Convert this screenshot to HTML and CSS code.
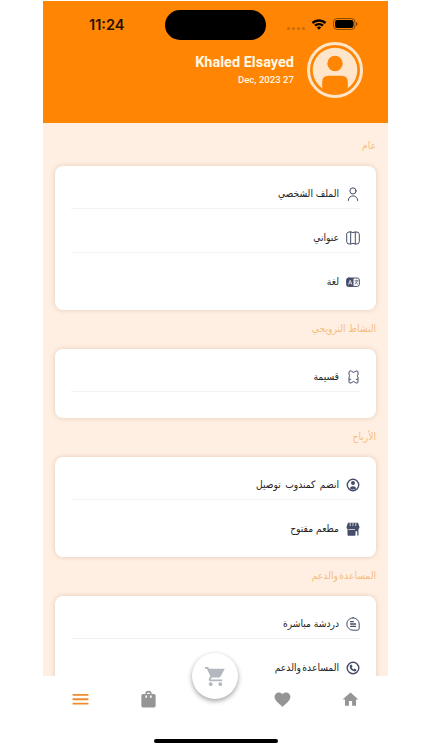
FILE: index.html
```html
<!DOCTYPE html>
<html lang="ar" dir="rtl">
<head>
<meta charset="utf-8">
<title>القائمة</title>
<link rel="stylesheet" href="styles.css">
</head>
<body>
<div class="phone">
  <header class="header">
    <div class="status" dir="ltr">
      <span class="time">11:24</span>
      <span class="island"></span>
      <span class="signals">
        <span class="dots"><i></i><i></i><i></i><i></i></span>
        <svg class="wifi" viewBox="0 0 16 12"><path d="M.6 4.1a10.7 10.7 0 0 1 14.8 0L13.7 6a8.2 8.2 0 0 0-11.4 0zM3.2 6.8a7 7 0 0 1 9.6 0l-1.7 1.8a4.6 4.6 0 0 0-6.2 0zM5.8 9.5a3.2 3.2 0 0 1 4.4 0L8 11.8z"/></svg>
        <svg class="battery" viewBox="0 0 25 12"><rect x=".5" y=".5" width="21.5" height="11" rx="3.6" fill="none" stroke="#8b4a06"/><rect x="2" y="2" width="18.5" height="8" rx="2.3"/><path d="M23 4v4q1.600-.6 1.600-2T23 4z" fill="#8b4a06"/></svg>
      </span>
    </div>
    <div class="profile">
      <svg class="avatar" viewBox="0 0 56 56"><circle cx="28" cy="28" r="22.300" fill="#ffe6cb"/><circle cx="28" cy="21.500" r="7.700" fill="#ff8503"/><path d="M15.200 50V40q0-6.300 6.300-6.300h13q6.300 0 6.300 6.300v10z" fill="#ff8503"/><circle cx="28" cy="28" r="26.500" fill="none" stroke="#ffe6cb" stroke-width="3"/></svg>
      <div class="who" dir="ltr"><div class="name">Khaled Elsayed</div><div class="date">Dec, 2023 27</div></div>
    </div>
  </header>
  <main class="content">
    <h2 class="label first">عام</h2>
    <section class="card">
      <div class="row"><svg class="icon" viewBox="0 0 14 14"><circle cx="7" cy="3.900" r="3.100"/><path d="M2.300 13.500c0-6.300 9.400-6.300 9.400 0"/></svg><span class="text">الملف الشخصي</span></div>
      <div class="row"><svg class="icon" viewBox="0 0 14 14"><path d="M4.700 1v12M9.300 1v12M4.700 1Q7 2.200 9.300 1q4-.5 4 2.200v7.600q0 2.700-4 2.200-2.300-1.200-4.600 0-4 .5-4-2.200V3.200Q.7.500 4.700 1z"/></svg><span class="text">عنواني</span></div>
      <div class="row"><svg class="icon" viewBox="0 0 14 14"><rect x=".7" y="3" width="12.600" height="8.400" rx="2"/><path class="solid" d="M1.500 3H7.500v8.400h-6Q.5 11.400.5 10V4.500Q.5 3 1.500 3z"/><path d="M2.700 9.300 4.200 5.200l1.500 4.100M3.200 8h2" class="white"/><path class="thin" d="M8.800 5.800h3.200M10.400 5v.8M11.500 5.800Q11 8 8.900 9.100M9.300 7l2.500 2.200"/></svg><span class="text">لغة</span></div>
    </section>
    <h2 class="label">النشاط الترويجي</h2>
    <section class="card short">
      <div class="row"><svg class="icon" viewBox="0 0 14 14"><path d="M5.300 1Q6 2.300 7.500 2.300T9.700 1h1.300q1 0 1 1v3q-.8.300-.8.900t.8.900V12q0 1-1 1H9.700Q9 11.700 7.500 11.700T5.300 13H4q-1 0-1-1V6.800q.8-.3.800-.9T3 5V2q0-1 1-1z"/><path d="M3.500 9.300h1.200m5.600 0h1.200"/></svg><span class="text">قسيمة</span></div>
      <div class="row"></div>
    </section>
    <h2 class="label">الأرباح</h2>
    <section class="card">
      <div class="row"><svg class="icon" viewBox="0 0 14 14"><circle cx="7" cy="7" r="5.700" stroke-width="1.400"/><circle class="solid" cx="7" cy="5.100" r="2"/><path class="solid" d="M3.700 10.200q.8-2 3.300-2t3.300 2Q7 13 3.700 10.200z"/></svg><span class="text wide">انضم كمندوب توصيل</span></div>
      <div class="row"><svg class="icon" viewBox="0 0 14 14"><path class="solid" d="M2 .7h10L13.500 5q0 1.500-1 1.900v6.600h-1.200V9.300H9.500V13q0 .8-.8.800H2.300q-.8 0-.8-.8V7Q.5 6.500.5 5z"/><path class="white" d="M4.200 1v2.600M7 1v2.600M9.800 1v2.600M3 7.500h5.500"/></svg><span class="text">مطعم مفتوح</span></div>
    </section>
    <h2 class="label tight">المساعدة والدعم</h2>
    <section class="card">
      <div class="row"><svg class="icon" viewBox="0 0 14 14"><path d="M7 .8a6.200 6.200 0 0 1 6.200 6.200v4.200q0 2-2 2H7A6.200 6.200 0 0 1 7 .8z"/><path d="M4.600 4.700h2.600M4.600 7h5M4.600 9.300h5" stroke-width="1.300"/></svg><span class="text">دردشة مباشرة</span></div>
      <div class="row"><svg class="icon" viewBox="0 0 14 14"><circle cx="7" cy="7" r="5.800" stroke-width="1.400"/><path class="solid" d="m4.200 3.900 1.200-.4 1.100 2-.8.900q.6 1.400 1.900 2l.9-.8 2 1.100q-.2 1.600-1.500 1.800Q3.600 9.600 3.700 5z"/></svg><span class="text tight">المساعدة والدعم</span></div>
    </section>
  </main>
  <nav class="nav">
    <span class="tab"><svg viewBox="0 0 24 24"><path d="M10 20v-6h4v6h5v-8h3L12 3 2 12h3v8z"/></svg></span>
    <span class="tab"><svg viewBox="0 0 24 24"><path d="m12 21.350-1.450-1.320C5.400 15.360 2 12.280 2 8.500 2 5.420 4.420 3 7.500 3c1.740 0 3.410.81 4.500 2.090C13.090 3.810 14.760 3 16.500 3 19.580 3 22 5.420 22 8.500c0 3.780-3.400 6.860-8.550 11.540z"/></svg></span>
    <span class="tab middle"><span class="cart"><svg viewBox="0 0 24 24"><path d="M7 18c-1.100 0-1.990.9-1.990 2S5.900 22 7 22s2-.9 2-2-.9-2-2-2zM1 2v2h2l3.600 7.590-1.350 2.450c-.16.28-.25.61-.25.960 0 1.100.9 2 2 2h12v-2H7.420c-.14 0-.25-.11-.25-.25l.03-.12.900-1.630h7.450c.75 0 1.410-.41 1.750-1.030L21.700 4H5.210l-.94-2zm16 16c-1.100 0-1.990.9-1.990 2s.89 2 1.990 2 2-.9 2-2-.9-2-2-2z"/></svg></span></span>
    <span class="tab"><svg viewBox="0 0 24 24"><path fill-rule="evenodd" d="M8 5a4 4 0 0 1 8 0h3q2 0 2 2v13q0 2-2 2H5q-2 0-2-2V7q0-2 2-2zm2 0h4a2 2 0 0 0-4 0zM8 7v2a1 1 0 0 0 2 0V7zm6 0v2a1 1 0 0 0 2 0V7z"/></svg></span>
    <span class="tab active"><svg viewBox="0 0 24 24"><path d="M2 5h20v2.300H2zm0 5.500h20v2.300H2zM2 16h20v2.300H2z"/></svg></span>
  </nav>
  <div class="home-bar"></div>
</div>
</body>
</html>
```
FILE: styles.css
```css
* { box-sizing: border-box; }
body { margin: 0; background: #fff; font-family: "DejaVu Sans Condensed", "DejaVu Sans", sans-serif; font-stretch: semi-condensed; }
.phone { width: 345px; height: 750px; margin: 0 34px 0 43px; padding-top: 1px; display: flex; flex-direction: column; overflow: hidden; background: #fff; }
.header { flex: none; height: 122px; background: #ff8503; }
.status { display: flex; align-items: flex-start; height: 40px; padding-top: 9px; }
.time { width: 122px; padding: 6px 0 0 46px; font: 600 14.500px/18px Inter, sans-serif; color: #251000; }
.island { width: 101px; height: 30px; border-radius: 15px; background: #000; }
.signals { display: flex; align-items: center; margin-left: 21px; padding-top: 8px; }
.dots { display: flex; gap: 2px; margin: 8px 6px 0 0; }
.dots i { width: 3px; height: 3px; border-radius: 50%; background: #c86b0d; }
.wifi { width: 16px; height: 12px; margin-right: 6px; }
.battery { width: 25px; height: 12px; }
.profile { display: flex; padding: 1px 25px 0 0; }
.avatar { width: 56px; height: 56px; }
.who { margin-right: 13px; padding-top: 12px; text-align: right; font-family: Roboto, sans-serif; font-stretch: normal; color: #fff8e4; }
.name { font-size: 14.500px; font-weight: 700; line-height: 18px; }
.date { font-size: 9.600px; font-weight: 500; line-height: 12px; margin-top: 2px; }
.content { flex: none; height: 553px; overflow: hidden; padding: 0 12px; background: #ffefe2; }
.label { display: flex; align-items: center; height: 39px; margin: 0; padding-bottom: 2px; font-size: 10.200px; font-weight: 400; color: #f5bd80; }
.label.first { height: 43px; padding-top: 3px; }
.card { padding: 14px 16px; border-radius: 8px; background: #fff; box-shadow: 0 0 5px rgba(120, 75, 35, .22); }
.short { height: 69px; padding-bottom: 0; }
.row { display: flex; align-items: center; height: 28px; font-size: 10.200px; color: #232323; }
.row + .row { height: 44px; padding-top: 15px; border-top: 1px solid #f2f2f2; }
.text { padding-bottom: 1px; }
.row:first-child .text { padding-bottom: 2px; }
.tight { word-spacing: -1.500px; }
.wide { word-spacing: 1.500px; }
.icon { width: 14px; height: 14px; margin-left: 7px; fill: none; stroke: #454d68; stroke-width: 1; stroke-linecap: round; stroke-linejoin: round; }
.solid { fill: #454d68; stroke: none; }
.white { stroke: #fff; stroke-width: .7; }
.thin { stroke-width: .6; }
.nav { position: relative; flex: none; display: flex; height: 62px; padding: 0 4px; background: #fff; }
.tab { flex: 1; display: flex; justify-content: center; padding-top: 14px; }
.tab svg { width: 19px; height: 19px; fill: #959595; }
.tab.active svg { fill: #ef8b2c; }
.middle { padding: 0; }
.cart { flex: none; display: flex; align-items: center; justify-content: center; width: 46px; height: 46px; margin-top: -23px; border-radius: 50%; background: #fff; box-shadow: 0 2px 5px rgba(0, 0, 0, .38); }
.middle .cart svg { width: 23px; height: 23px; fill: #b2b8bd; }
.home-bar { flex: none; width: 124px; height: 4px; margin: 1px auto 0; border-radius: 2px; background: #000; }
```
